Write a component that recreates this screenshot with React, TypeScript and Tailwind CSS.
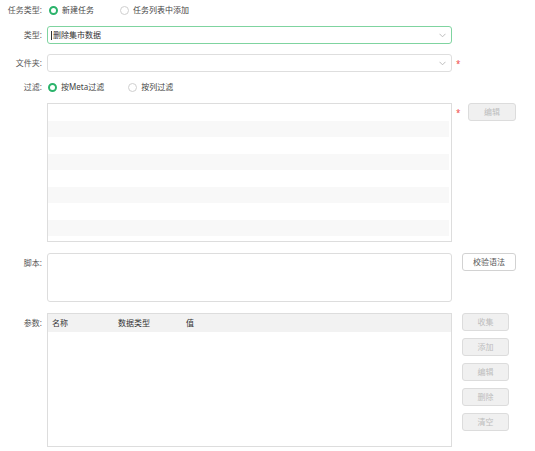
const font = { fontFamily: '"Noto Sans", "Noto Sans CJK SC", sans-serif' }

type RadioProps = { checked?: boolean; label: string }

const Radio = ({ checked, label }: RadioProps) => (
    <label className="flex items-center">
        {checked ? (
            <span className="box-border h-[9px] w-[9px] rounded-full border-[2.5px] border-[#2bb36b] bg-white" />
        ) : (
            <span className="box-border h-[9px] w-[9px] rounded-full border border-[#cfcfcf] bg-white" />
        )}
        <span className="ml-[4px] text-[#444]">{label}</span>
    </label>
)

const Label = ({ text, className = '' }: { text: string; className?: string }) => (
    <div className={`w-[42px] shrink-0 text-right text-[#555] ${className}`}>{text}</div>
)

const Chevron = () => (
    <svg width="7" height="5" viewBox="0 0 7 5" className="mr-[5px]">
        <path d="M0.5 0.8 L3.5 3.8 L6.5 0.8" fill="none" stroke="#b5b5b5" strokeWidth="0.9" />
    </svg>
)

const Star = () => <span className="text-[8px] leading-none text-[#f04848]">*</span>

const DisabledButton = ({ text, className = '' }: { text: string; className?: string }) => (
    <button
        className={`box-border h-[18px] rounded-[3px] border border-[#dcdcdc] bg-[#f0f0f0] text-[#bdbdbd] ${className}`}
    >
        {text}
    </button>
)

const stripes = [0, 1, 2, 3, 4, 5, 6, 7]

export default function App() {
    return (
        <div className="h-[451px] w-[535px] bg-white text-[8px] leading-none" style={font}>
            {/* --- 任务类型 --- */}
            <div className="flex h-[20px] items-center">
                <Label text="任务类型:" />
                <div className="ml-[7px] flex items-center">
                    <Radio checked label="新建任务" />
                    <div className="ml-[26px]">
                        <Radio label="任务列表中添加" />
                    </div>
                </div>
            </div>

            {/* --- 类型 --- */}
            <div className="mt-[6px] flex h-[18px] items-center">
                <Label text="类型:" />
                <div className="ml-[5px] box-border flex h-[18px] w-[405px] items-center justify-between rounded-[3px] border border-[#7fd4a0] bg-white">
                    <div className="flex items-center pl-[3px] text-[#333]">
                        <span className="mr-[1px] h-[9px] w-px bg-[#333]" />
                        删除集市数据
                    </div>
                    <Chevron />
                </div>
            </div>

            {/* --- 文件夹 --- */}
            <div className="mt-[10px] flex h-[18px] items-center">
                <Label text="文件夹:" />
                <div className="ml-[5px] box-border flex h-[18px] w-[405px] items-center justify-end rounded-[3px] border border-[#dedede] bg-white">
                    <Chevron />
                </div>
                <div className="ml-[4px] pt-[2px]">
                    <Star />
                </div>
            </div>

            {/* --- 过滤 --- */}
            <div className="mt-[5px] flex h-[20px] items-center">
                <Label text="过滤:" />
                <div className="ml-[6px] flex items-center">
                    <Radio checked label="按Meta过滤" />
                    <div className="ml-[24px]">
                        <Radio label="按列过滤" />
                    </div>
                </div>
            </div>

            <div className="mt-[6px] flex items-start">
                <div className="w-[42px] shrink-0" />
                <div className="ml-[5px] box-border h-[139px] w-[405px] border border-[#dddddd] bg-white pr-[2px]">
                    {stripes.map((i) => (
                        <div key={i} className={`h-[16.5px] ${i % 2 === 1 ? 'bg-[#f8f8f8]' : 'bg-white'}`} />
                    ))}
                </div>
                <div className="w-[16px] pl-[4px] pt-[6px]">
                    <Star />
                </div>
                <DisabledButton text="编辑" className="w-[48px]" />
            </div>

            {/* --- 脚本 --- */}
            <div className="mt-[11px] flex items-start">
                <Label text="脚本:" className="pt-[6px]" />
                <div className="ml-[5px] box-border h-[49px] w-[405px] rounded-[3px] border border-[#dddddd] bg-white" />
                <button className="ml-[10px] box-border h-[18px] w-[54px] rounded-[3px] border border-[#d2d2d2] bg-white text-[#555]">
                    校验语法
                </button>
            </div>

            {/* --- 参数 --- */}
            <div className="mt-[11px] flex items-start">
                <Label text="参数:" className="pt-[6px]" />
                <div className="ml-[5px] box-border h-[134px] w-[405px] border border-[#dddddd] bg-white">
                    <div className="flex h-[18px] items-center bg-[#f2f2f2] text-[#333]">
                        <div className="w-[70px] pl-[4px]">名称</div>
                        <div className="w-[68px]">数据类型</div>
                        <div>值</div>
                    </div>
                </div>
                <div className="ml-[10px] flex flex-col gap-[7px]">
                    <DisabledButton text="收集" className="w-[47px]" />
                    <DisabledButton text="添加" className="w-[47px]" />
                    <DisabledButton text="编辑" className="w-[47px]" />
                    <DisabledButton text="删除" className="w-[47px]" />
                    <DisabledButton text="清空" className="w-[47px]" />
                </div>
            </div>
        </div>
    )
}
